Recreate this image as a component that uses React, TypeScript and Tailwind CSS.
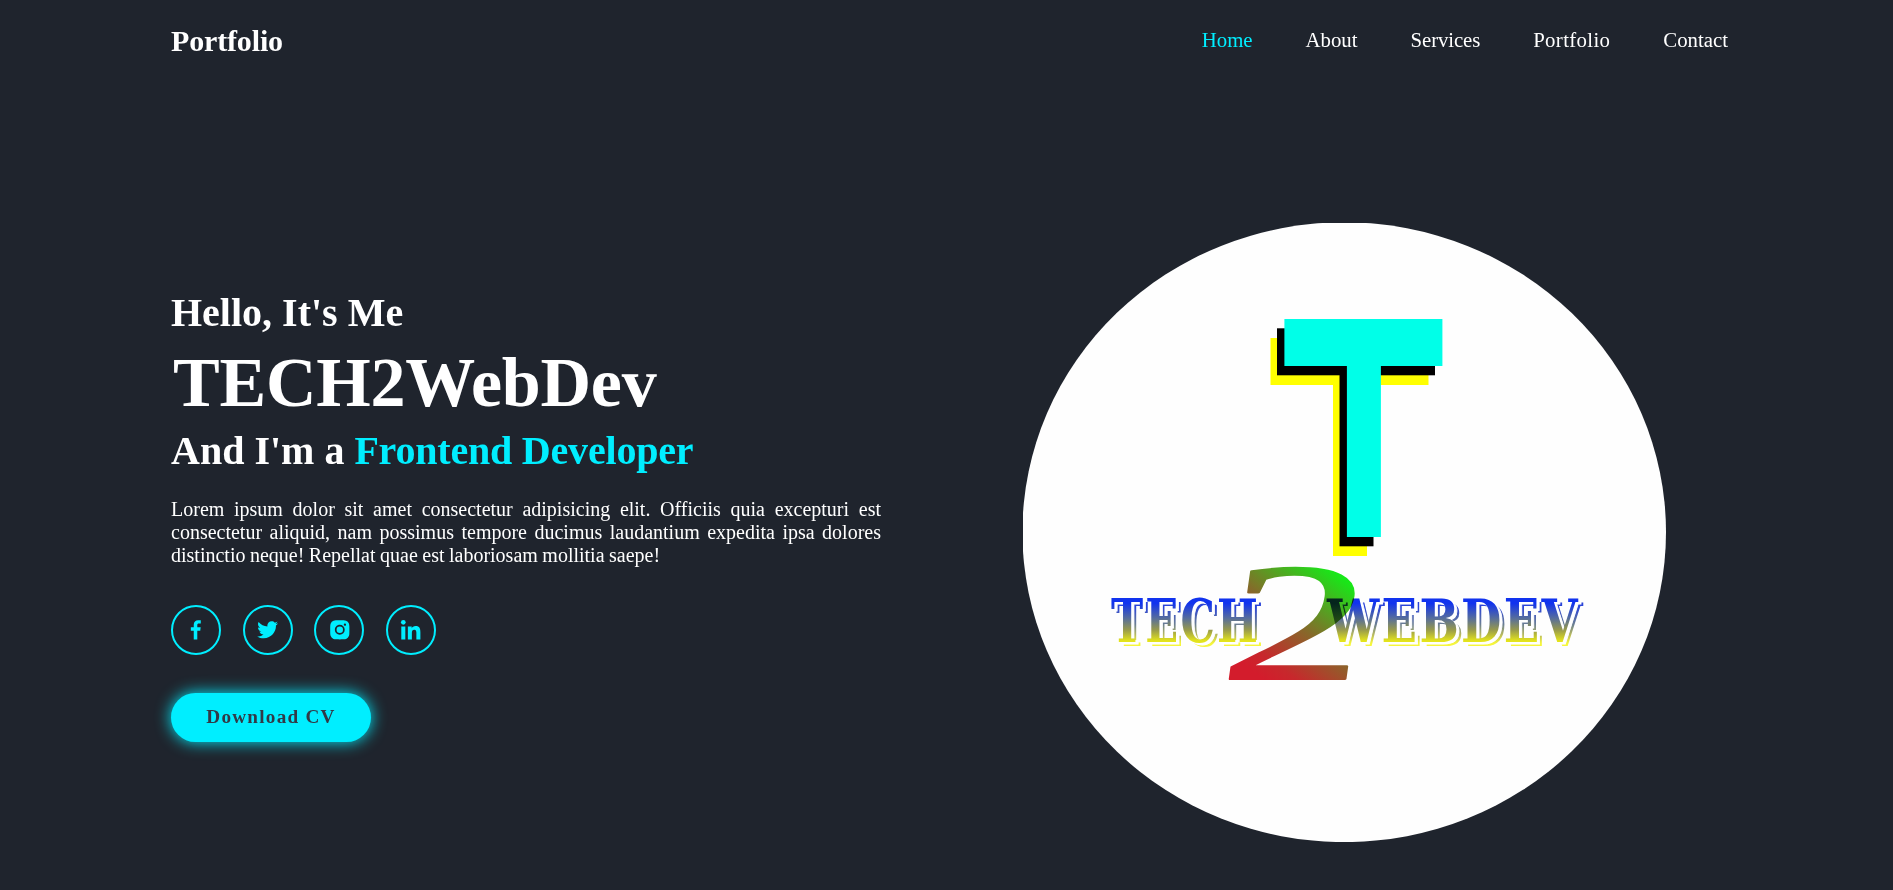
import { BiLogoFacebook, BiLogoTwitter, BiLogoInstagramAlt, BiLogoLinkedin } from 'react-icons/bi';

const links = [
  { label: 'Home', style: 'text-[#00eeff]' },
  { label: 'About', style: 'text-white' },
  { label: 'Services', style: 'text-white tracking-[-0.1px]' },
  { label: 'Portfolio', style: 'text-white tracking-[0.35px]' },
  { label: 'Contact', style: 'text-white' },
];

const socials = [
  { name: 'Facebook', Icon: BiLogoFacebook },
  { name: 'Twitter', Icon: BiLogoTwitter },
  { name: 'Instagram', Icon: BiLogoInstagramAlt },
  { name: 'LinkedIn', Icon: BiLogoLinkedin },
];

function Mark({ x, y, fill }: { x: number; y: number; fill: string }) {
  return (
    <g fill={fill} transform={`translate(${x} ${y})`}>
      <rect width="158" height="47" />
      <rect x="62.5" width="34" height="218" />
    </g>
  );
}

function Logo() {
  return (
    <svg width="643" height="619" viewBox="0 0 643 619" className="block">
      <defs>
        <linearGradient id="word" gradientUnits="userSpaceOnUse" x1="0" y1="375" x2="0" y2="420">
          <stop offset="0.12" stopColor="#1133ee" />
          <stop offset="0.45" stopColor="#566d9c" />
          <stop offset="0.7" stopColor="#95984e" />
          <stop offset="0.95" stopColor="#e3e31c" />
        </linearGradient>
        <linearGradient id="shade" gradientUnits="userSpaceOnUse" x1="0" y1="375" x2="0" y2="420">
          <stop offset="0.12" stopColor="#2a44d8" />
          <stop offset="0.5" stopColor="#6c7f92" />
          <stop offset="0.72" stopColor="#b5b860" />
          <stop offset="0.92" stopColor="#f6f63c" />
        </linearGradient>
        {/* Coordinates are in the glyph's own space, before it is stretched. */}
        <linearGradient id="brush" gradientUnits="userSpaceOnUse" x1="8" y1="-20" x2="76" y2="-80">
          <stop offset="0" stopColor="#d41c2c" />
          <stop offset="0.15" stopColor="#c8282c" />
          <stop offset="0.5" stopColor="#87692a" />
          <stop offset="1" stopColor="#18e818" />
        </linearGradient>
        <g id="letters" className="font-['DejaVu_Serif',serif] font-bold">
          <text x="88" y="419" fontSize="60" letterSpacing="3" textLength="149" lengthAdjust="spacingAndGlyphs">
            TECH
          </text>
          <text x="304" y="419" fontSize="60" letterSpacing="3" textLength="253" lengthAdjust="spacingAndGlyphs">
            WEBDEV
          </text>
        </g>
      </defs>
      <ellipse cx="321.2" cy="309.2" rx="321.8" ry="309.9" fill="#fefefe" />
      <Mark x={247.5} y={115} fill="#ffff00" />
      <Mark x={254} y={105.3} fill="#000000" />
      <Mark x={261.4} y={96} fill="#00ffe8" />
      <use href="#letters" x="5" y="4" fill="url(#shade)" />
      <use href="#letters" x="2.8" y="2.2" fill="#fff" stroke="#fff" strokeWidth="1" />
      <use href="#letters" fill="url(#word)" />
      <text
        transform="translate(195 456) skewX(-8) scale(1.78 1.05)"
        fontSize="160"
        className="font-['Liberation_Serif',serif] mix-blend-multiply"
        fill="url(#brush)"
        stroke="url(#brush)"
        strokeWidth="2"
        strokeLinejoin="round"
      >
        2
      </text>
    </svg>
  );
}

export default function App() {
  return (
    <div className="flex h-[890px] w-full flex-col overflow-hidden bg-[#1f242d] font-['Liberation_Serif','Times_New_Roman',serif] text-white">
      <header className="flex h-[89px] shrink-0 items-center justify-between pr-[165px] pl-[171px] pb-[8px]">
        <a className="text-[30px] leading-none font-bold tracking-[-0.15px]">Portfolio</a>
        <nav className="flex gap-[53px] text-[20.8px] leading-none">
          {links.map((link) => (
            <a key={link.label} className={link.style}>
              {link.label}
            </a>
          ))}
        </nav>
      </header>
      <main className="flex flex-1 items-start pl-[171px]">
        <section className="w-[710px] pt-[201px]">
          <h3 className="text-[40px] leading-[46px] font-bold">Hello, It's Me</h3>
          <h1 className="pt-[1px] pl-[2px] text-[70px] leading-[91px] font-bold tracking-[-0.25px]">TECH2WebDev</h1>
          <h3 className="text-[40px] leading-[46px] font-bold">
            And I'm a <span className="tracking-[-0.2px] text-[#00eeff]">Frontend Developer</span>
          </h3>
          <p className="mt-[24px] text-justify text-[20px] leading-[23px] [word-spacing:-0.5px]">
            Lorem ipsum dolor sit amet consectetur adipisicing elit. Officiis quia excepturi est consectetur
            aliquid, nam possimus tempore ducimus laudantium expedita ipsa dolores distinctio neque! Repellat
            quae est laboriosam mollitia saepe!
          </p>
          <div className="mt-[38px] flex gap-[21.67px]">
            {socials.map(({ name, Icon }) => (
              <a
                key={name}
                aria-label={name}
                className="flex size-[50px] items-center justify-center rounded-full border-2 border-[#00eeff] text-[25.6px] text-[#00eeff]"
              >
                <Icon />
              </a>
            ))}
          </div>
          <a className="mt-[38px] flex h-[49px] w-[200px] items-center justify-center rounded-full bg-[#00eeff] text-[19.2px] font-bold tracking-[1.25px] text-[#323946] shadow-[0_0_16px_#00eeff]">
            Download CV
          </a>
        </section>
        <div className="mt-[134px] ml-[142px]">
          <Logo />
        </div>
      </main>
    </div>
  );
}
